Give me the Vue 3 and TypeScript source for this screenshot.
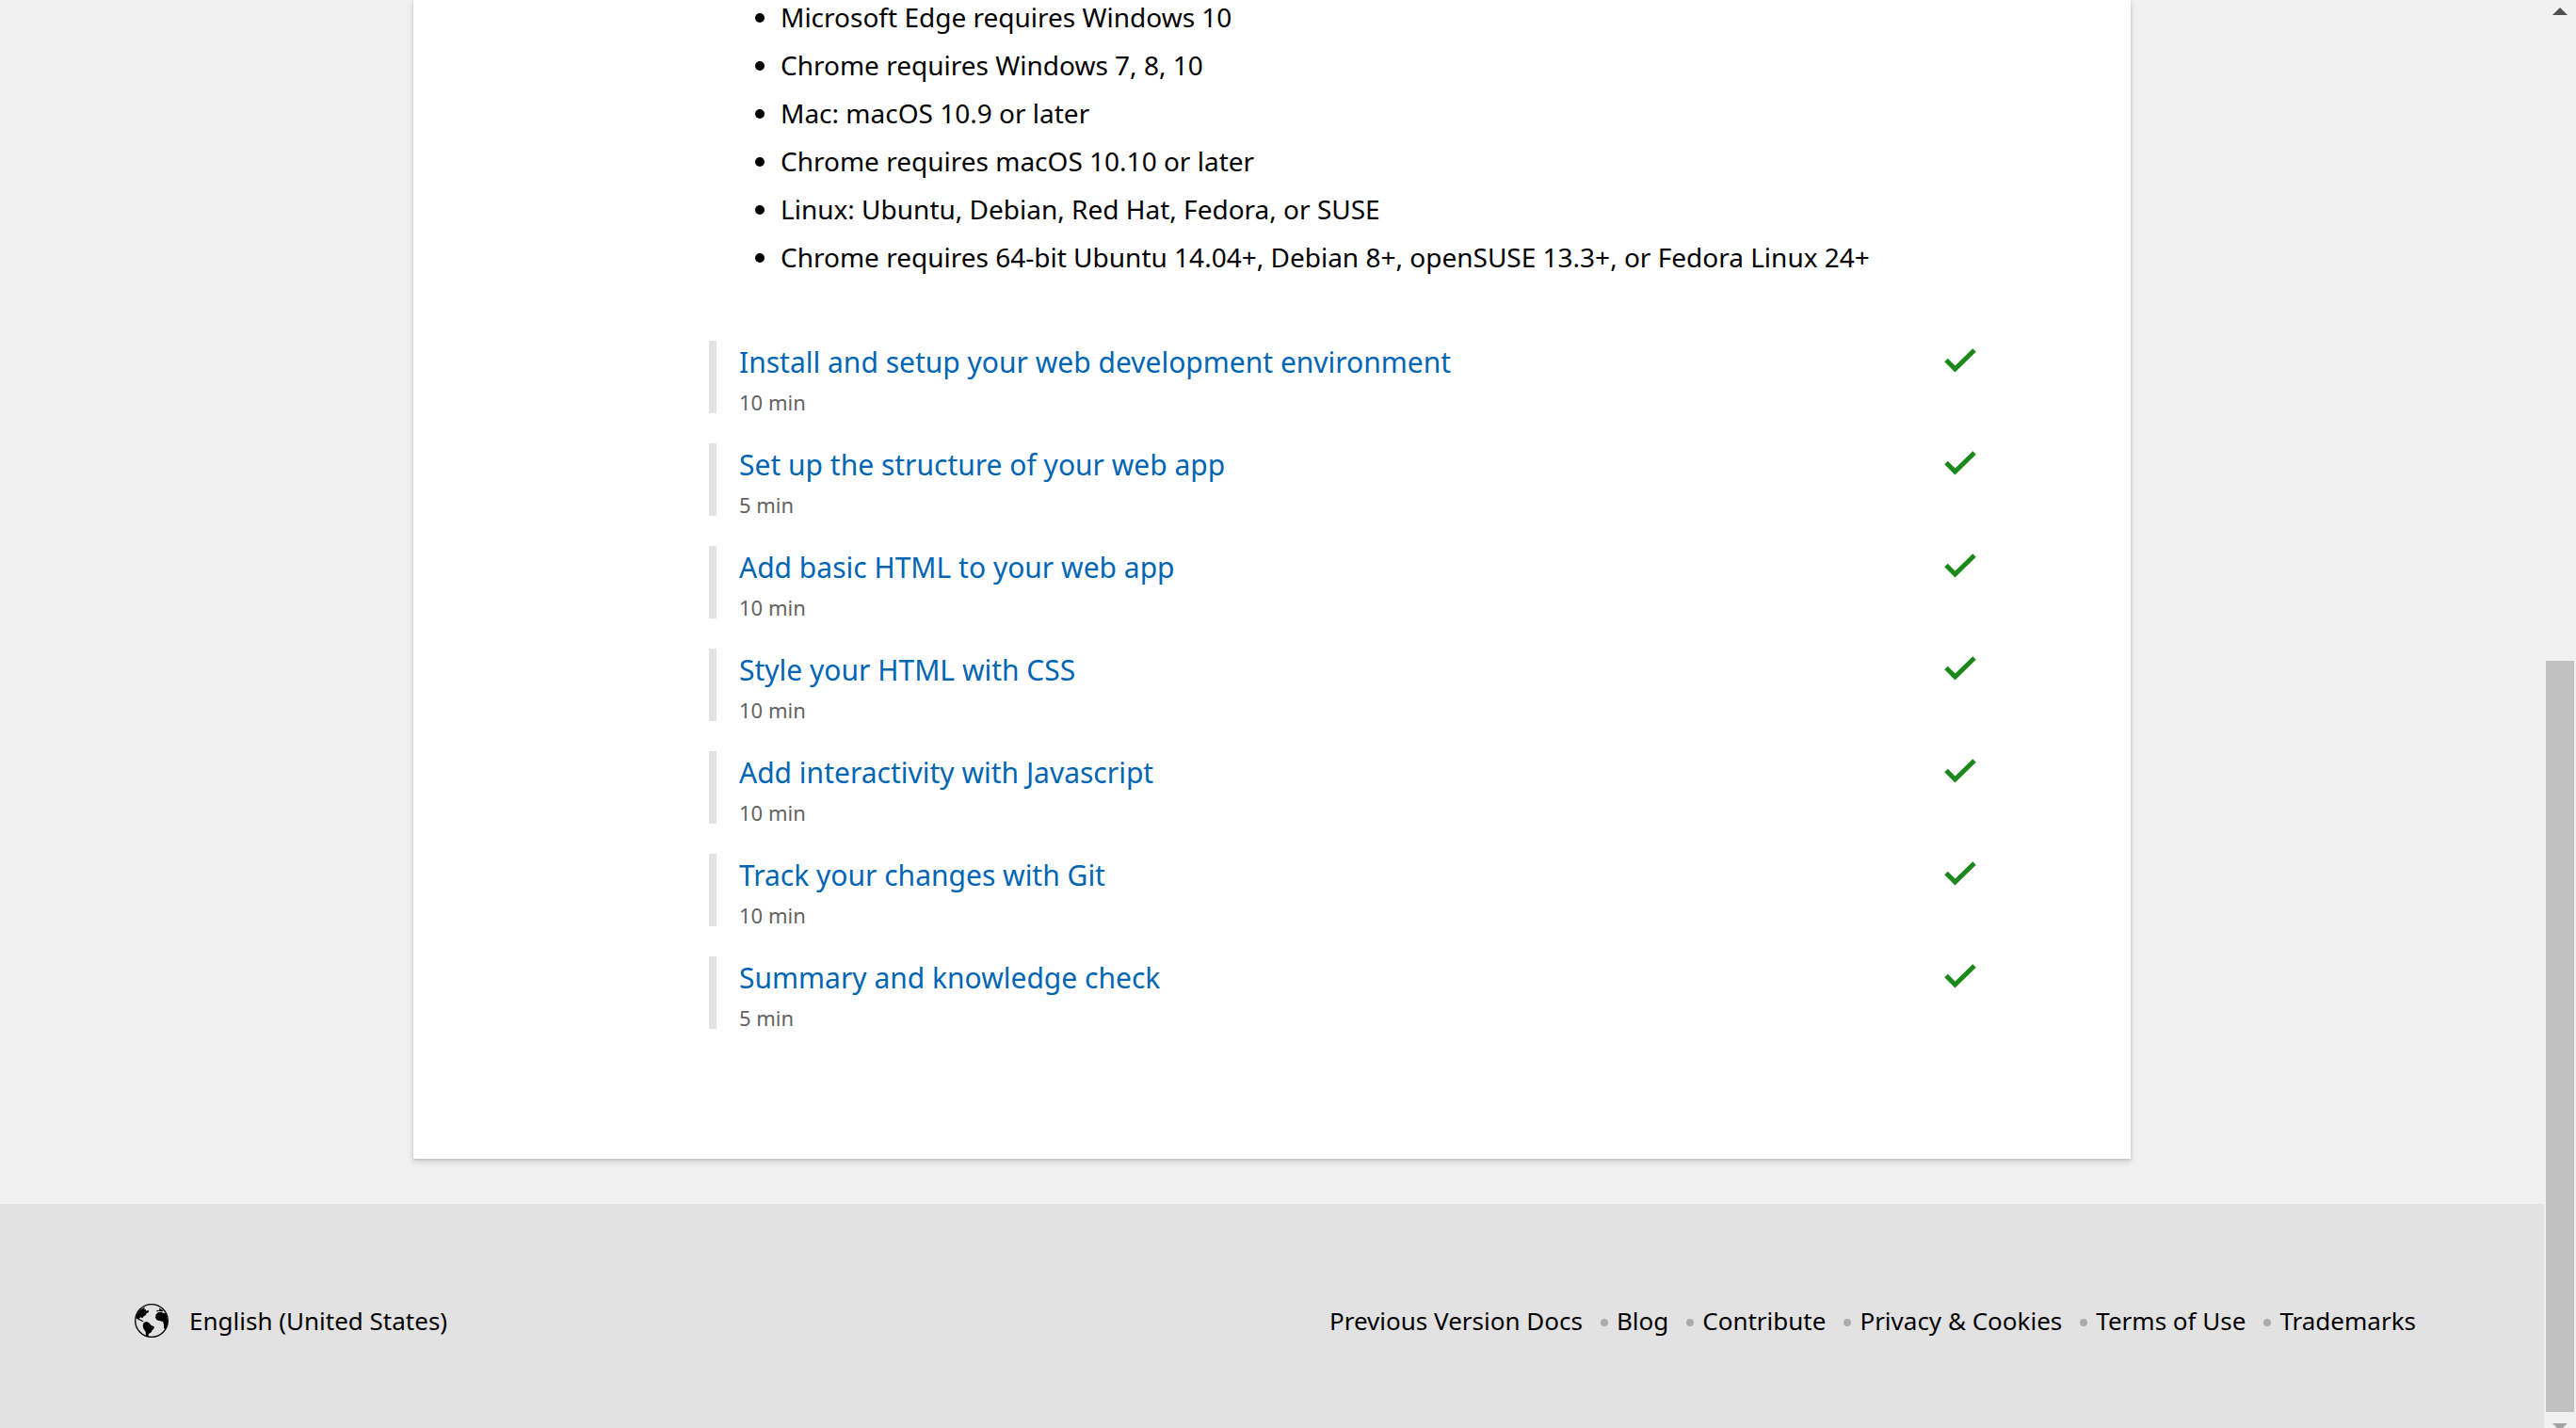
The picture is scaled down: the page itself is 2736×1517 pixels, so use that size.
<script setup lang="ts">
interface Unit {
  title: string
  minutes: number
}

const requirements: string[] = [
  'Microsoft Edge requires Windows 10',
  'Chrome requires Windows 7, 8, 10',
  'Mac: macOS 10.9 or later',
  'Chrome requires macOS 10.10 or later',
  'Linux: Ubuntu, Debian, Red Hat, Fedora, or SUSE',
  'Chrome requires 64-bit Ubuntu 14.04+, Debian 8+, openSUSE 13.3+, or Fedora Linux 24+',
]

const units: Unit[] = [
  { title: 'Install and setup your web development environment', minutes: 10 },
  { title: 'Set up the structure of your web app', minutes: 5 },
  { title: 'Add basic HTML to your web app', minutes: 10 },
  { title: 'Style your HTML with CSS', minutes: 10 },
  { title: 'Add interactivity with Javascript', minutes: 10 },
  { title: 'Track your changes with Git', minutes: 10 },
  { title: 'Summary and knowledge check', minutes: 5 },
]

const footerLinks: string[] = [
  'Previous Version Docs',
  'Blog',
  'Contribute',
  'Privacy & Cookies',
  'Terms of Use',
  'Trademarks',
]
</script>

<template>
  <div class="window">
    <div class="page">
      <main class="content">
        <article class="card">
          <ul class="requirements">
            <li v-for="item in requirements" :key="item">{{ item }}</li>
          </ul>
          <ol class="units">
            <li v-for="unit in units" :key="unit.title" class="unit">
              <div class="unit-text">
                <a href="#" class="unit-title">{{ unit.title }}</a>
                <span class="unit-time">{{ unit.minutes }} min</span>
              </div>
              <svg class="check" viewBox="0 0 34 26" role="img" aria-label="Completed">
                <path d="M2 12.5 L11.5 22 L32 2" />
              </svg>
            </li>
          </ol>
        </article>
      </main>
      <footer class="footer">
        <a href="#" class="locale">
          <svg class="globe" viewBox="0 0 108 108" aria-hidden="true">
            <circle cx="54" cy="54" r="52" class="globe-ring" />
            <path d="M6 38 C10 25 21 14 33 11 L30 19 L36 17 L36 23 L44 20 L45 27 L38 31 L35 37 L29 40 L25 46 L19 43 L14 47 L22 52 L30 57 L25 57 L12 51 L4 46 Z" />
            <path d="M29 60 L38 57 L46 61 L52 68 L62 73 L62 79 L56 84 L53 91 L45 96 L43 104 L36 103 L35 89 L28 79 L26 70 Z" />
            <path d="M68 34 L75 27 L86 27 L92 30 L98 29 C106 44 108 66 98 82 L93 78 L93 67 L90 57 L81 55 L71 52 L66 44 Z" />
            <path d="M70 20 L76 22 L80 19 L77 13 L84 17 L92 23 L88 25 L78 24 L70 25 Z" />
          </svg>
          <span>English (United States)</span>
        </a>
        <nav aria-label="Footer">
          <ul class="links">
            <li v-for="link in footerLinks" :key="link"><a href="#">{{ link }}</a></li>
          </ul>
        </nav>
      </footer>
    </div>
    <div class="scrollbar" aria-hidden="true">
      <svg class="arrow-up" viewBox="0 0 34 24"><path d="M9 16 L17 8 L25 16 Z" /></svg>
      <div class="track-before"></div>
      <div class="thumb"></div>
      <svg class="arrow-down" viewBox="0 0 34 17"><path d="M9 12 L25 12 L17 20 Z" /></svg>
    </div>
  </div>
</template>

<style>
body {
  margin: 0;
  overflow: hidden;
}
</style>

<style scoped>
.window {
  display: flex;
  height: 100vh;
  overflow: hidden;
  background: #f1f1f1;
  color: #000;
  font-family: "Noto Sans", "Open Sans", sans-serif;
  font-size: 28px;
  line-height: 36px;
}
.page {
  display: flex;
  flex: 1;
  flex-direction: column;
  min-width: 0;
}
ul,
ol {
  margin: 0;
  padding: 0;
}
a {
  color: inherit;
  text-decoration: none;
}
.content {
  padding: 0 439px 48px;
}
.card {
  padding: 0 164px 138px 314px;
  background: #fff;
  box-shadow: 0 3px 7px rgba(0, 0, 0, 0.16), 0 1px 2px rgba(0, 0, 0, 0.11);
}
.requirements {
  padding-left: 76px;
}
.requirements li {
  margin-bottom: 15px;
}
.units {
  display: flex;
  flex-direction: column;
  gap: 32px;
  padding-top: 56px;
  list-style: none;
}
.unit {
  display: flex;
  align-items: flex-start;
  justify-content: space-between;
  height: 77px;
  border-left: 8px solid #e2e2e2;
  padding-left: 24px;
}
.unit-text {
  display: flex;
  flex-direction: column;
}
.unit-title {
  color: #0065b3;
  font-size: 30px;
  line-height: 46px;
}
.unit-time {
  color: #636363;
  font-size: 22px;
  line-height: 38px;
}
.check {
  width: 34px;
  height: 26px;
  margin-top: 8px;
}
.check path {
  fill: none;
  stroke: #1b881b;
  stroke-width: 5;
}
.footer {
  display: flex;
  flex: 1 0 auto;
  align-items: flex-start;
  justify-content: space-between;
  padding: 106px 136px 0 143px;
  background: #e2e2e2;
  font-size: 26px;
}
.locale {
  display: flex;
  align-items: center;
  gap: 22px;
}
.globe {
  width: 36px;
  height: 36px;
}
.globe-ring {
  fill: none;
  stroke: #000;
  stroke-width: 4;
}
.links {
  display: flex;
  list-style: none;
}
.links li {
  display: flex;
  align-items: center;
}
.links li + li::before {
  width: 8px;
  height: 8px;
  margin: 4px 9px 0 19px;
  border-radius: 50%;
  background: #acacac;
  content: "";
}
.scrollbar {
  display: flex;
  flex-direction: column;
  width: 34px;
  background: #f1f1f1;
}
.arrow-up {
  height: 24px;
  fill: #505050;
}
.track-before {
  flex: 678;
}
.thumb {
  flex: 798;
  margin: 0 2px;
  background: #c1c1c1;
}
.arrow-down {
  height: 17px;
  fill: #a3a3a3;
}
</style>
